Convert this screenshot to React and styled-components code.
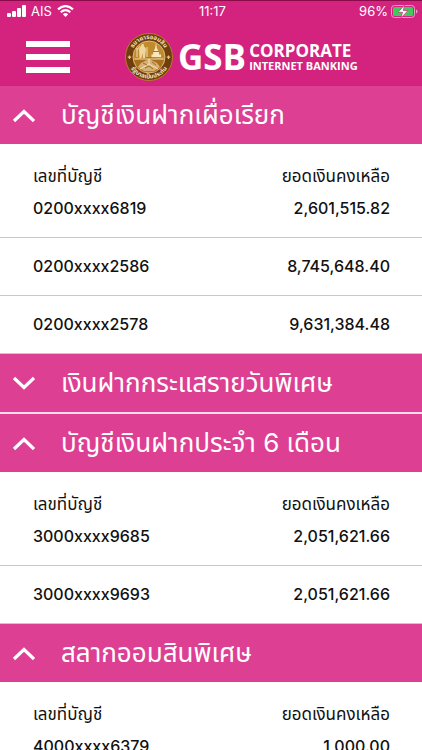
import React, { useState } from 'react';
import styled, { createGlobalStyle } from 'styled-components';

const GlobalStyle = createGlobalStyle`
  * { box-sizing: border-box; }
  body { margin: 0; background: #fff; }
`;

const Screen = styled.div`
  display: flex;
  flex-direction: column;
  height: 100vh;
  color: #111;
  font-family: Roboto, 'Noto Sans Thai', 'Noto Sans', sans-serif;
`;

const TopBar = styled.header`
  flex: none;
  color: #fff;
  background: #d4237f;
  border-top: 1px solid #8a0a4a;
  border-bottom: 1px solid #bd2a78;
`;

const StatusBar = styled.div`
  display: grid;
  grid-template-columns: 1fr auto 1fr;
  align-items: center;
  height: 20px;
  padding: 0 4px 0 7px;
  font: 400 13px/20px Inter, sans-serif;
`;

const StatusGroup = styled.div`
  display: flex;
  align-items: center;
  justify-content: ${(p) => (p.$end ? 'flex-end' : 'flex-start')};
  gap: ${(p) => (p.$end ? 3 : 5)}px;
`;

const NavBar = styled.div`
  display: flex;
  align-items: center;
  gap: 55px;
  height: 64px;
  padding: 8px 26px 0;
`;

const MenuButton = styled.button`
  display: flex;
  flex-direction: column;
  gap: 7px;
  width: 44px;
  padding: 0;
  border: 0;
  background: none;
  cursor: pointer;
`;

const MenuBar = styled.span`
  height: 6px;
  background: #fff;
`;

const Brand = styled.div`
  display: flex;
  align-items: center;
  gap: 5px;
`;

const BrandShort = styled.span`
  font: 700 35px/40px 'Open Sans', sans-serif;
`;

const BrandLines = styled.div`
  display: flex;
  flex-direction: column;
  margin-left: -2px;
  white-space: nowrap;
`;

const BrandName = styled.span`
  font: 700 17px/18px 'Open Sans', sans-serif;
`;

const BrandTag = styled.span`
  font: 700 11px/12px 'Open Sans', sans-serif;
`;

const AccountList = styled.main`
  flex: 1;
  min-height: 0;
  overflow-y: auto;
  scrollbar-width: none;
`;

const Group = styled.section`
  border-bottom: ${(p) => (p.$open ? '0' : '2px solid #fbdcec')};
`;

const GroupTitle = styled.h2`
  margin: 0;
`;

const GroupToggle = styled.button`
  display: flex;
  align-items: center;
  gap: 26px;
  width: 100%;
  height: 58px;
  padding: 0 12px;
  border: 0;
  color: #fff;
  background: #dd3f93;
  font: 400 26px/32px Inter, 'Noto Sans Thai', 'Noto Sans', sans-serif;
  text-align: left;
  white-space: nowrap;
  cursor: pointer;
`;

const Accounts = styled.table`
  width: 100%;
  border-collapse: separate;
  border-spacing: 0;
`;

const HeadCell = styled.th`
  padding: ${(p) => (p.$right ? '22px 32px 0 0' : '22px 0 0 33px')};
  font-size: 17px;
  font-weight: 400;
  line-height: 21px;
  text-align: ${(p) => (p.$right ? 'right' : 'left')};
`;

const Cell = styled.td`
  padding: ${(p) => (p.$right ? '18px 32px 19px 0' : '18px 0 19px 33px')};
  border-bottom: 1px solid #c8c8c8;
  font: 500 16px/20px Inter, sans-serif;
  text-align: ${(p) => (p.$right ? 'right' : 'left')};

  tr:first-child > & {
    padding-top: 11px;
  }
`;

function SignalIcon() {
  return (
    <svg width="19" height="12" viewBox="0 0 19 12" fill="#fff" aria-hidden="true">
      <rect x="0" y="8" width="4" height="4" rx="1" />
      <rect x="5" y="6" width="4" height="6" rx="1" />
      <rect x="10" y="3" width="4" height="9" rx="1" />
      <rect x="15" y="0" width="4" height="12" rx="1" />
    </svg>
  );
}

function WifiIcon() {
  return (
    <svg width="17" height="12" viewBox="0 0 17 12" aria-hidden="true">
      <g fill="none" stroke="#fff" strokeWidth="2.2">
        <path d="M1 4.4Q8.500-2.200 16 4.400" />
        <path d="M3.700 7.300Q8.500 3 13.300 7.300" />
      </g>
      <path d="M5.800 9.200Q8.500 7 11.200 9.200L8.500 12Z" fill="#fff" />
    </svg>
  );
}

function BatteryIcon() {
  return (
    <svg width="27" height="13" viewBox="0 0 27 13" aria-hidden="true">
      <rect x=".5" y=".5" width="23" height="12" rx="3" fill="none" stroke="#eba0c8" />
      <rect x="2" y="2" width="20" height="9" rx="1.500" fill="#3fcb5c" />
      <path d="M25 4.500Q26.500 5 26.500 6.500T25 8.500Z" fill="#eba0c8" />
      <path d="M13.500 0L7 7.300H11.500L10 13L17 5.500H12.300Z" fill="#fff" stroke="#d4237f" strokeWidth=".7" />
    </svg>
  );
}

function Emblem() {
  return (
    <svg width="48" height="48" viewBox="0 0 48 48" role="img" aria-label="ธนาคารออมสิน">
      <defs>
        <path id="emblem-top" d="M6 24A18 18 0 0 1 42 24" />
        <path id="emblem-bottom" d="M2.500 24A21.500 21.500 0 0 0 45.500 24" />
      </defs>
      <circle cx="24" cy="24" r="23.500" fill="#6e3d10" stroke="#b87b28" />
      <circle cx="24" cy="24" r="16" fill="#c08a2e" stroke="#e9cb88" strokeWidth=".8" />
      <g fill="#f6e6c0" fontFamily="'Noto Sans Thai', 'Noto Sans', sans-serif" fontSize="6" fontWeight="700" textAnchor="middle">
        <text><textPath href="#emblem-top" startOffset="50%">ธนาคารออมสิน</textPath></text>
        <text><textPath href="#emblem-bottom" startOffset="50%">รัฐบาลเป็นประกัน</textPath></text>
      </g>
      <path d="M4.500 22.500V26M2.800 24.200H6.200M43.500 22.500V26M41.800 24.200H45.200" stroke="#e9c87a" strokeWidth="1.200" />
      <path d="M9 27L24 24L39 27L36 34L30 38.500H18L12 34Z" fill="#a86e1e" />
      <g fill="#fae8bc">
        <path d="M31 9L31.800 15L34 19V21.500H36V24H26.500V21.500H28.200V19L30.200 15Z" />
        <path d="M24 26L32 30L35 34L29 38H19L13 34L16 30Z" opacity=".55" />
        <path d="M17 11Q19 10 19 13L21 16L20 25H18L17.500 20L16.500 25H14.500L14 16Z" opacity=".8" />
      </g>
      <g fill="none" stroke="#fae8bc" strokeWidth=".9">
        <path d="M12 15V24M22 14V24M12 17L15 13" />
        <path d="M9.500 26H38.500M24 26V31L15 36M24 31L33 36" />
      </g>
      <g fill="none" stroke="#8d5617" strokeWidth=".8">
        <path d="M28 18.500H34M18 30L22 32M27 29L31 32M20 35L24 33L28 36" />
      </g>
    </svg>
  );
}

function Chevron({ up }) {
  return (
    <svg width="23" height="15" viewBox="0 0 23 15" fill="none" stroke="#fff" strokeWidth="3.2" aria-hidden="true">
      <path d={up ? 'M2 13L12 3.500L22 13' : 'M2 2L12 11.500L22 2'} />
    </svg>
  );
}

const groups = [
  {
    title: 'บัญชีเงินฝากเผื่อเรียก',
    open: true,
    accounts: [
      ['0200xxxx6819', '2,601,515.82'],
      ['0200xxxx2586', '8,745,648.40'],
      ['0200xxxx2578', '9,631,384.48'],
    ],
  },
  { title: 'เงินฝากกระแสรายวันพิเศษ', open: false, accounts: [] },
  {
    title: 'บัญชีเงินฝากประจำ 6 เดือน',
    open: true,
    accounts: [
      ['3000xxxx9685', '2,051,621.66'],
      ['3000xxxx9693', '2,051,621.66'],
    ],
  },
  { title: 'สลากออมสินพิเศษ', open: true, accounts: [['4000xxxx6379', '1,000.00']] },
];

function AccountGroup({ group }) {
  const [open, setOpen] = useState(group.open);
  return (
    <Group $open={open}>
      <GroupTitle>
        <GroupToggle type="button" aria-expanded={open} onClick={() => setOpen(!open)}>
          <Chevron up={open} />
          {group.title}
        </GroupToggle>
      </GroupTitle>
      {open && (
        <Accounts>
          <thead>
            <tr>
              <HeadCell scope="col">เลขที่บัญชี</HeadCell>
              <HeadCell scope="col" $right>ยอดเงินคงเหลือ</HeadCell>
            </tr>
          </thead>
          <tbody>
            {group.accounts.map(([number, balance]) => (
              <tr key={number}>
                <Cell>{number}</Cell>
                <Cell $right>{balance}</Cell>
              </tr>
            ))}
          </tbody>
        </Accounts>
      )}
    </Group>
  );
}

export default function App() {
  return (
    <Screen>
      <GlobalStyle />
      <TopBar>
        <StatusBar>
          <StatusGroup>
            <SignalIcon />
            <span>AIS</span>
            <WifiIcon />
          </StatusGroup>
          <span>11:17</span>
          <StatusGroup $end>
            <span>96%</span>
            <BatteryIcon />
          </StatusGroup>
        </StatusBar>
        <NavBar>
          <MenuButton type="button" aria-label="เมนู">
            <MenuBar />
            <MenuBar />
            <MenuBar />
          </MenuButton>
          <Brand>
            <Emblem />
            <BrandShort>GSB</BrandShort>
            <BrandLines>
              <BrandName>CORPORATE</BrandName>
              <BrandTag>INTERNET BANKING</BrandTag>
            </BrandLines>
          </Brand>
        </NavBar>
      </TopBar>
      <AccountList>
        {groups.map((group) => (
          <AccountGroup key={group.title} group={group} />
        ))}
      </AccountList>
    </Screen>
  );
}
